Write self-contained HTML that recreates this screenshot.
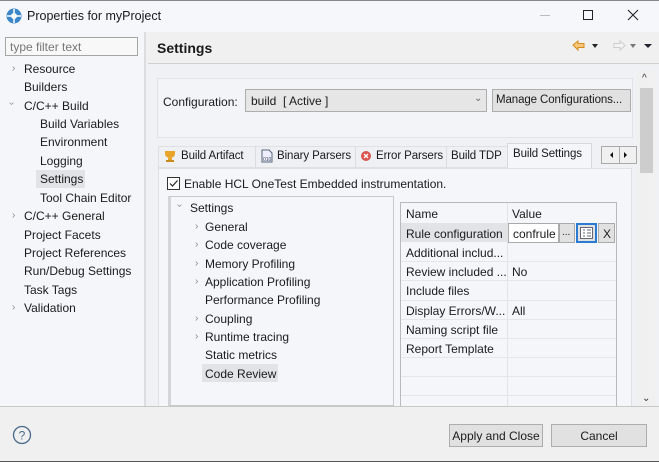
<!DOCTYPE html>
<html><head><meta charset="utf-8"><style>
*{box-sizing:border-box;margin:0;padding:0}
body{width:659px;height:462px;overflow:hidden;background:#f0f0f0;font-family:"Liberation Sans",sans-serif;font-size:12px;color:#1a1a1a;position:relative}
.a{position:absolute;white-space:nowrap}
.chev{position:absolute;color:#888;font-size:10px}
.t{font-size:11.5px;letter-spacing:-0.1px}
</style></head><body>
<div class="a" style="left:0;top:0;width:659px;height:32px;background:#f6f7fa;border-top:1px solid #888"></div>
<svg class="a" style="left:6px;top:8px" width="16" height="16"><circle cx="8" cy="8" r="7.5" fill="#3a86c8"/><circle cx="8" cy="8" r="3" fill="#fff"/><path d="M8 1v4M8 11v4M1 8h4M11 8h4" stroke="#fff" stroke-width="1.5"/></svg>
<div class="a" style="left:27px;top:9px;font-size:12.5px">Properties for myProject</div>
<div class="a" style="left:540px;top:15px;width:10px;height:1px;background:#bbb"></div>
<div class="a" style="left:583px;top:10px;width:10px;height:10px;border:1px solid #222"></div>
<svg class="a" style="left:627px;top:9px" width="12" height="12"><path d="M1 1L11 11M11 1L1 11" stroke="#222" stroke-width="1.1"/></svg>
<div class="a" style="left:0;top:32px;width:146px;height:374px;background:#f5f6fa;border-right:2px solid #dcdde0"></div>
<div class="a" style="left:5px;top:37px;width:133px;height:19px;border:1px solid #a5a5a5;background:#f8f8f8;color:#777;padding:2px 4px;font-size:12px">type filter text</div>
<div class="chev" style="left:12px;top:63px">›</div>
<div class="a" style="left:24px;top:62px">Resource</div>
<div class="a" style="left:24px;top:80px">Builders</div>
<div class="chev" style="left:10px;top:98px;transform:rotate(90deg)">›</div>
<div class="a" style="left:24px;top:99px">C/C++ Build</div>
<div class="a" style="left:40px;top:117px">Build Variables</div>
<div class="a" style="left:40px;top:135px">Environment</div>
<div class="a" style="left:40px;top:154px">Logging</div>
<div class="a" style="left:36px;top:170px;width:49px;height:18px;background:#e2e3e6"></div>
<div class="a" style="left:40px;top:172px">Settings</div>
<div class="a" style="left:40px;top:191px">Tool Chain Editor</div>
<div class="chev" style="left:12px;top:210px">›</div>
<div class="a" style="left:24px;top:209px">C/C++ General</div>
<div class="a" style="left:24px;top:228px">Project Facets</div>
<div class="a" style="left:24px;top:246px">Project References</div>
<div class="a" style="left:24px;top:264px">Run/Debug Settings</div>
<div class="a" style="left:24px;top:283px">Task Tags</div>
<div class="chev" style="left:12px;top:302px">›</div>
<div class="a" style="left:24px;top:301px">Validation</div>
<div class="a" style="left:148px;top:32px;width:511px;height:32px;background:#f0f0f0;border-bottom:1px solid #cfd0d3"></div>
<div class="a" style="left:157px;top:40px;font-weight:bold;font-size:14px">Settings</div>
<svg class="a" style="left:572px;top:40px" width="85" height="12"><path d="M1 5L6 1V3.5H12V7.5H6V10Z" fill="#f6c777" stroke="#d38d20"/><path d="M20 4l3 4 3-4z" fill="#222"/><path d="M42 3.5H48V1L53 5.5 48 10V7.5H42Z" fill="#f3f3f3" stroke="#ccc"/><path d="M58 4l3 4 3-4z" fill="#777"/><path d="M72 4l4 4 4-4z" fill="#223"/></svg>
<div class="a" style="left:148px;top:65px;width:511px;height:341px;background:#f0f1f4"></div>
<div class="a" style="left:638px;top:70px;width:17px;height:336px;background:#f0f0f0"></div>
<div class="a" style="left:640px;top:88px;width:13px;height:85px;background:#cdcdcd"></div>
<div class="a" style="left:642px;top:73px;font-size:10px;color:#333">^</div>
<div class="a" style="left:157px;top:78px;width:476px;height:60px;background:#f3f4f8;border:1px solid #e2e3e6"></div>
<div class="a" style="left:163px;top:95px">Configuration:</div>
<div class="a" style="left:245px;top:89px;width:242px;height:23px;background:#e6e6e6;border:1px solid #adadad;padding:4px 5px">build &nbsp;[ Active ]</div>
<div class="a" style="left:474px;top:93px;color:#666;font-size:10px">⌄</div>
<div class="a t" style="left:492px;top:89px;width:139px;height:23px;background:#e1e1e1;border:1px solid #adadad;padding:4px 3px">Manage Configurations...</div>
<div class="a" style="left:158px;top:146px;width:350px;height:22px;background:#eef0f4;border:1px solid #e0e0e3"></div>
<svg class="a" style="left:164px;top:150px" width="12" height="13"><path d="M1 1h10v3a5 4 0 0 1-10 0z" fill="#e8a52a"/><rect x="4" y="8" width="4" height="2" fill="#e8a52a"/><rect x="2" y="10" width="8" height="2" fill="#c88a1a"/></svg>
<div class="a t" style="left:181px;top:150px">Build Artifact</div>
<div class="a" style="left:255px;top:146px;width:1px;height:22px;background:#dcdcdc"></div>
<svg class="a" style="left:261px;top:149px" width="12" height="14"><path d="M1 1h7l3 3v9H1z" fill="#eef" stroke="#567"/><text x="2" y="12" font-size="5" fill="#345" font-family="Liberation Sans">010</text></svg>
<div class="a t" style="left:277px;top:150px">Binary Parsers</div>
<div class="a" style="left:355px;top:146px;width:1px;height:22px;background:#dcdcdc"></div>
<svg class="a" style="left:360px;top:150px" width="12" height="12"><circle cx="6" cy="6" r="5" fill="#d9534f"/><path d="M4 4l4 4M8 4l-4 4" stroke="#fff" stroke-width="1.3"/></svg>
<div class="a t" style="left:376px;top:150px">Error Parsers</div>
<div class="a" style="left:446px;top:146px;width:1px;height:22px;background:#dcdcdc"></div>
<div class="a t" style="left:451px;top:150px">Build TDP</div>
<div class="a" style="left:507px;top:143px;width:85px;height:26px;background:#f5f6fa;border:1px solid #d8d9dc;border-bottom:none"></div>
<div class="a t" style="left:513px;top:148px">Build Settings</div>
<div class="a" style="left:601px;top:146px;width:36px;height:18px;border:1px solid #aaa;background:#f0f0f0"></div>
<div class="a" style="left:619px;top:147px;width:1px;height:16px;background:#aaa"></div>
<svg class="a" style="left:601px;top:146px" width="36" height="18"><path d="M12 6v6l-3-3z" fill="#111"/><path d="M23 6v6l3-3z" fill="#111"/></svg>
<div class="a" style="left:158px;top:168px;width:474px;height:238px;background:#f5f6fa;border:1px solid #e0e0e3;border-bottom:none"></div>
<div class="a" style="left:167px;top:177px;width:13px;height:13px;border:1px solid #333;background:#fff"></div>
<svg class="a" style="left:168px;top:178px" width="11" height="11"><path d="M2 5.5l2.5 2.5 5-5.5" fill="none" stroke="#222" stroke-width="1.2"/></svg>
<div class="a" style="left:184px;top:177px">Enable HCL OneTest Embedded instrumentation.</div>
<div class="a" style="left:168px;top:196px;width:226px;height:210px;border:1px solid #c9c9cc;border-left:3px solid #d5d5d8;background:#f5f6fa"></div>
<div class="chev" style="left:178px;top:200px;transform:rotate(90deg)">›</div>
<div class="a" style="left:190px;top:201px">Settings</div>
<div class="chev" style="left:195px;top:221px">›</div><div class="a" style="left:205px;top:220px">General</div>
<div class="chev" style="left:195px;top:239px">›</div><div class="a" style="left:205px;top:238px">Code coverage</div>
<div class="chev" style="left:195px;top:258px">›</div><div class="a" style="left:205px;top:257px">Memory Profiling</div>
<div class="chev" style="left:195px;top:276px">›</div><div class="a" style="left:205px;top:275px">Application Profiling</div>
<div class="a" style="left:205px;top:293px">Performance Profiling</div>
<div class="chev" style="left:195px;top:313px">›</div><div class="a" style="left:205px;top:312px">Coupling</div>
<div class="chev" style="left:195px;top:331px">›</div><div class="a" style="left:205px;top:330px">Runtime tracing</div>
<div class="a" style="left:205px;top:348px">Static metrics</div>
<div class="a" style="left:202px;top:364px;width:76px;height:18px;background:#e2e3e6"></div>
<div class="a" style="left:205px;top:367px">Code Review</div>
<div class="a" style="left:400px;top:202px;width:217px;height:204px;border:1px solid #b9b9bc;border-bottom:none;background:#f5f6fa"></div>
<div class="a" style="left:507px;top:203px;width:1px;height:203px;background:#e3e3e6"></div>
<div class="a" style="left:406px;top:207px">Name</div>
<div class="a" style="left:512px;top:207px">Value</div>
<div class="a" style="left:401px;top:223px;width:107px;height:19px;background:#e2e3e6"></div>
<div class="a" style="left:406px;top:227px">Rule configuration</div>
<div class="a" style="left:508px;top:223px;width:51px;height:20px;background:#fff;border:1px solid #aaa;padding:3px 4px;overflow:hidden">confrule</div>
<div class="a" style="left:559px;top:223px;width:16px;height:20px;background:#e1e1e1;border:1px solid #aaa;padding:3px 2px;font-size:10px">...</div>
<div class="a" style="left:576px;top:223px;width:21px;height:20px;background:#e1e1e1;border:2px solid #2a7ad2"></div>
<svg class="a" style="left:580px;top:227px" width="13" height="12"><rect x="0.5" y="0.5" width="12" height="11" fill="#fff" stroke="#667"/><path d="M3 3h2M3 6h2M3 9h2M7 3h4M7 6h4M7 9h4" stroke="#667"/></svg>
<div class="a" style="left:598px;top:223px;width:17px;height:20px;background:#e1e1e1;border:1px solid #aaa;padding:3px 4px">X</div>
<div class="a" style="left:406px;top:246px">Additional includ...</div>
<div class="a" style="left:406px;top:265px">Review included ...</div><div class="a" style="left:512px;top:265px">No</div>
<div class="a" style="left:406px;top:284px">Include files</div>
<div class="a" style="left:406px;top:304px">Display Errors/W...</div><div class="a" style="left:512px;top:304px">All</div>
<div class="a" style="left:406px;top:323px">Naming script file</div>
<div class="a" style="left:406px;top:342px">Report Template</div>
<div class="a" style="left:401px;top:261px;width:215px;height:1px;background:#e6e6e9"></div>
<div class="a" style="left:401px;top:280px;width:215px;height:1px;background:#e6e6e9"></div>
<div class="a" style="left:401px;top:300px;width:215px;height:1px;background:#e6e6e9"></div>
<div class="a" style="left:401px;top:319px;width:215px;height:1px;background:#e6e6e9"></div>
<div class="a" style="left:401px;top:338px;width:215px;height:1px;background:#e6e6e9"></div>
<div class="a" style="left:401px;top:357px;width:215px;height:1px;background:#e6e6e9"></div>
<div class="a" style="left:401px;top:376px;width:215px;height:1px;background:#e6e6e9"></div>
<div class="a" style="left:401px;top:395px;width:215px;height:1px;background:#e6e6e9"></div>
<div class="a" style="left:642px;top:393px;font-size:10px;color:#333">⌄</div>
<div class="a" style="left:0;top:406px;width:659px;height:1px;background:#c8c8c8"></div>
<div class="a" style="left:0;top:407px;width:659px;height:55px;background:#f0f0f0;border-bottom:1px solid #555"></div>
<svg class="a" style="left:12px;top:425px" width="20" height="20"><circle cx="10" cy="10" r="8.5" fill="none" stroke="#4a6a8a" stroke-width="1.3"/><text x="10" y="14.5" text-anchor="middle" font-size="12" fill="#4a6a8a" font-family="Liberation Sans">?</text></svg>
<div class="a" style="left:449px;top:424px;width:94px;height:23px;background:#e1e1e1;border:1px solid #adadad;text-align:center;padding-top:4px">Apply and Close</div>
<div class="a" style="left:551px;top:424px;width:96px;height:23px;background:#e1e1e1;border:1px solid #adadad;text-align:center;padding-top:4px">Cancel</div>
</body></html>
